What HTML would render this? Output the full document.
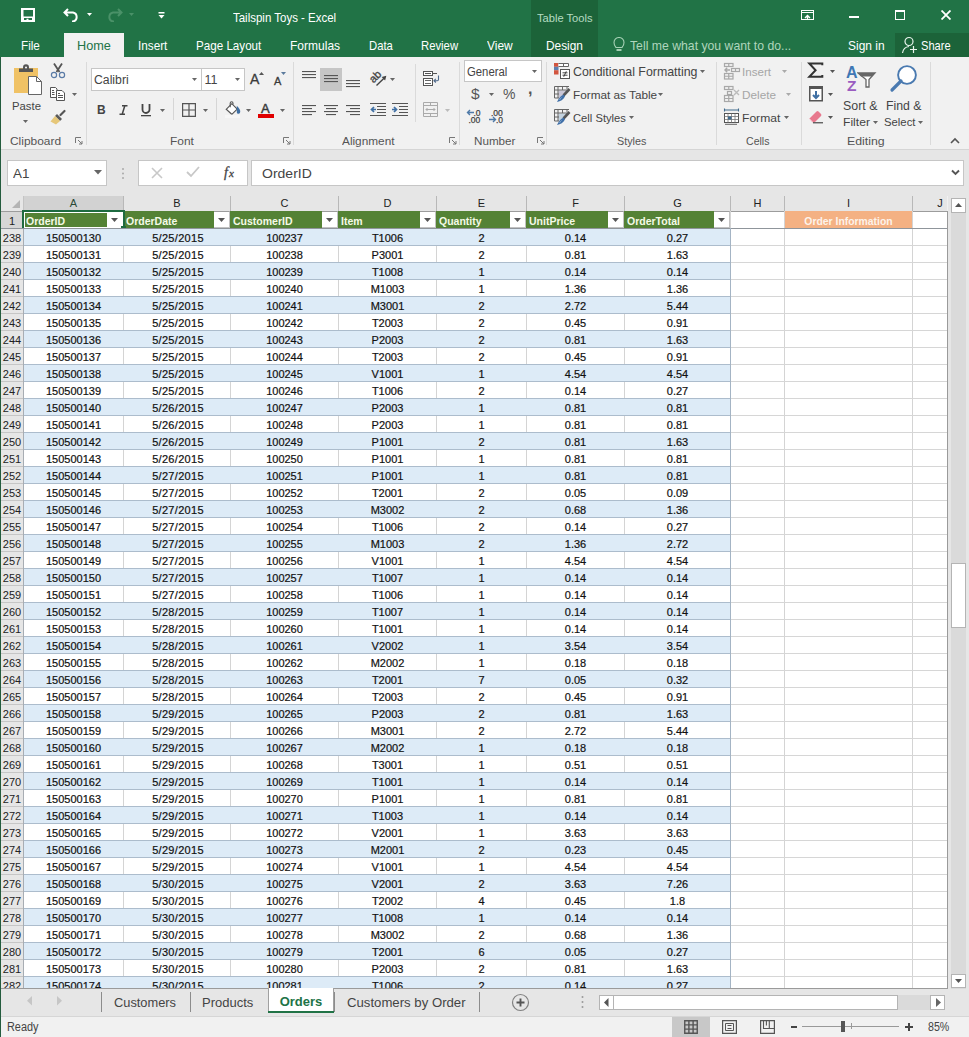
<!DOCTYPE html>
<html><head><meta charset="utf-8"><style>
html,body{margin:0;padding:0;width:969px;height:1037px;overflow:hidden;background:#f1f1f1}
body{position:relative;font-family:"Liberation Sans",sans-serif}
body>div,body>svg{position:absolute}
.t{white-space:nowrap;font-size:12px}
.ch{text-align:center;font-size:11px;line-height:14px}
.rh{left:1px;width:22px;text-align:center;font-size:11px;line-height:18px;color:#222}
.cell{text-align:center;font-size:11px;line-height:18px;color:#111;-webkit-text-stroke:0.2px #111}
.fb{width:16px;height:17px;background:#fff;box-sizing:border-box;border-top:1px solid #9c9c9c;border-right:1px solid #c2c2c2;border-bottom:1px solid #c2c2c2}
.sb{background:#fff;border:1px solid #b4b4b4}
</style></head><body>
<div style="left:1px;top:196px;width:946px;height:15px;background:#e6e6e6"></div>
<svg style="left:12px;top:200px" width="8" height="8"><polygon points="8,0 8,8 0,8" fill="#b4b4b4"/></svg>
<div style="left:24px;top:196px;width:99px;height:14px;background:#d2d2d2"></div>
<div style="left:123px;top:194px;width:1px;height:17px;background:#b8b8b8"></div>
<div style="left:230px;top:194px;width:1px;height:17px;background:#b8b8b8"></div>
<div style="left:338px;top:194px;width:1px;height:17px;background:#b8b8b8"></div>
<div style="left:436px;top:194px;width:1px;height:17px;background:#b8b8b8"></div>
<div style="left:526px;top:194px;width:1px;height:17px;background:#b8b8b8"></div>
<div style="left:624px;top:194px;width:1px;height:17px;background:#b8b8b8"></div>
<div style="left:730px;top:194px;width:1px;height:17px;background:#b8b8b8"></div>
<div style="left:784px;top:194px;width:1px;height:17px;background:#b8b8b8"></div>
<div style="left:912px;top:194px;width:1px;height:17px;background:#b8b8b8"></div>
<div style="left:1px;top:211px;width:946px;height:1px;background:#9c9c9c"></div>
<div class="t ch" style="left:24px;top:196px;width:99px;color:#2a4a36">A</div>
<div class="t ch" style="left:124px;top:196px;width:106px;color:#222">B</div>
<div class="t ch" style="left:231px;top:196px;width:107px;color:#222">C</div>
<div class="t ch" style="left:339px;top:196px;width:97px;color:#222">D</div>
<div class="t ch" style="left:437px;top:196px;width:89px;color:#222">E</div>
<div class="t ch" style="left:527px;top:196px;width:97px;color:#222">F</div>
<div class="t ch" style="left:625px;top:196px;width:105px;color:#222">G</div>
<div class="t ch" style="left:731px;top:196px;width:53px;color:#222">H</div>
<div class="t ch" style="left:785px;top:196px;width:127px;color:#222">I</div>
<div class="t ch" style="left:913px;top:196px;width:54px;color:#222">J</div>
<div style="left:1px;top:212px;width:22px;height:776px;background:#e6e6e6"></div>
<div style="left:1px;top:212px;width:22px;height:16px;background:#d6d6d6"></div>
<div style="left:23px;top:196px;width:1px;height:15px;background:#c4c4c4"></div>
<div style="left:23px;top:211px;width:1px;height:777px;background:#a8adb3"></div>
<div style="left:24px;top:212px;width:923px;height:776px;background:#fff"></div>
<div style="left:23px;top:211px;width:101px;height:17px;background:#548235"></div>
<div class="t" style="left:26px;top:213px;color:#f4fae6;font-weight:bold;font-size:10.5px;line-height:17px">OrderID</div>
<div class="fb" style="left:107px;top:211px"></div>
<svg style="left:111px;top:218px" width="7" height="4"><polygon points="0,0 7,0 3.5,4" fill="#555"/></svg>
<div style="left:123px;top:211px;width:108px;height:17px;background:#548235"></div>
<div class="t" style="left:126px;top:213px;color:#f4fae6;font-weight:bold;font-size:10.5px;line-height:17px">OrderDate</div>
<div class="fb" style="left:214px;top:211px"></div>
<svg style="left:218px;top:218px" width="7" height="4"><polygon points="0,0 7,0 3.5,4" fill="#555"/></svg>
<div style="left:230px;top:211px;width:109px;height:17px;background:#548235"></div>
<div class="t" style="left:233px;top:213px;color:#f4fae6;font-weight:bold;font-size:10.5px;line-height:17px">CustomerID</div>
<div class="fb" style="left:322px;top:211px"></div>
<svg style="left:326px;top:218px" width="7" height="4"><polygon points="0,0 7,0 3.5,4" fill="#555"/></svg>
<div style="left:338px;top:211px;width:99px;height:17px;background:#548235"></div>
<div class="t" style="left:341px;top:213px;color:#f4fae6;font-weight:bold;font-size:10.5px;line-height:17px">Item</div>
<div class="fb" style="left:420px;top:211px"></div>
<svg style="left:424px;top:218px" width="7" height="4"><polygon points="0,0 7,0 3.5,4" fill="#555"/></svg>
<div style="left:436px;top:211px;width:91px;height:17px;background:#548235"></div>
<div class="t" style="left:439px;top:213px;color:#f4fae6;font-weight:bold;font-size:10.5px;line-height:17px">Quantity</div>
<div class="fb" style="left:510px;top:211px"></div>
<svg style="left:514px;top:218px" width="7" height="4"><polygon points="0,0 7,0 3.5,4" fill="#555"/></svg>
<div style="left:526px;top:211px;width:99px;height:17px;background:#548235"></div>
<div class="t" style="left:529px;top:213px;color:#f4fae6;font-weight:bold;font-size:10.5px;line-height:17px">UnitPrice</div>
<div class="fb" style="left:608px;top:211px"></div>
<svg style="left:612px;top:218px" width="7" height="4"><polygon points="0,0 7,0 3.5,4" fill="#555"/></svg>
<div style="left:624px;top:211px;width:107px;height:17px;background:#548235"></div>
<div class="t" style="left:627px;top:213px;color:#f4fae6;font-weight:bold;font-size:10.5px;line-height:17px">OrderTotal</div>
<div class="fb" style="left:714px;top:211px"></div>
<svg style="left:718px;top:218px" width="7" height="4"><polygon points="0,0 7,0 3.5,4" fill="#555"/></svg>
<div style="left:785px;top:211px;width:127px;height:17px;background:#f4b183"></div>
<div class="t" style="left:785px;top:212px;width:127px;text-align:center;color:#fdf3ea;font-weight:bold;font-size:10.4px;line-height:19px">Order Information</div>
<div style="left:123px;top:229px;width:1px;height:759px;background:#d4d4d4"></div>
<div style="left:230px;top:229px;width:1px;height:759px;background:#d4d4d4"></div>
<div style="left:338px;top:229px;width:1px;height:759px;background:#d4d4d4"></div>
<div style="left:436px;top:229px;width:1px;height:759px;background:#d4d4d4"></div>
<div style="left:526px;top:229px;width:1px;height:759px;background:#d4d4d4"></div>
<div style="left:624px;top:229px;width:1px;height:759px;background:#d4d4d4"></div>
<div style="left:784px;top:211px;width:1px;height:777px;background:#d4d4d4"></div>
<div style="left:912px;top:211px;width:1px;height:777px;background:#d4d4d4"></div>
<div style="left:24px;top:229px;width:706px;height:16px;background:#ddebf7"></div>
<div style="left:24px;top:263px;width:706px;height:16px;background:#ddebf7"></div>
<div style="left:24px;top:297px;width:706px;height:16px;background:#ddebf7"></div>
<div style="left:24px;top:331px;width:706px;height:16px;background:#ddebf7"></div>
<div style="left:24px;top:365px;width:706px;height:16px;background:#ddebf7"></div>
<div style="left:24px;top:399px;width:706px;height:16px;background:#ddebf7"></div>
<div style="left:24px;top:433px;width:706px;height:16px;background:#ddebf7"></div>
<div style="left:24px;top:467px;width:706px;height:16px;background:#ddebf7"></div>
<div style="left:24px;top:501px;width:706px;height:16px;background:#ddebf7"></div>
<div style="left:24px;top:535px;width:706px;height:16px;background:#ddebf7"></div>
<div style="left:24px;top:569px;width:706px;height:16px;background:#ddebf7"></div>
<div style="left:24px;top:603px;width:706px;height:16px;background:#ddebf7"></div>
<div style="left:24px;top:637px;width:706px;height:16px;background:#ddebf7"></div>
<div style="left:24px;top:671px;width:706px;height:16px;background:#ddebf7"></div>
<div style="left:24px;top:705px;width:706px;height:16px;background:#ddebf7"></div>
<div style="left:24px;top:739px;width:706px;height:16px;background:#ddebf7"></div>
<div style="left:24px;top:773px;width:706px;height:16px;background:#ddebf7"></div>
<div style="left:24px;top:807px;width:706px;height:16px;background:#ddebf7"></div>
<div style="left:24px;top:841px;width:706px;height:16px;background:#ddebf7"></div>
<div style="left:24px;top:875px;width:706px;height:16px;background:#ddebf7"></div>
<div style="left:24px;top:909px;width:706px;height:16px;background:#ddebf7"></div>
<div style="left:24px;top:943px;width:706px;height:16px;background:#ddebf7"></div>
<div style="left:24px;top:977px;width:706px;height:16px;background:#ddebf7"></div>
<div style="left:1px;top:228px;width:946px;height:1px;background:#8f959b"></div>
<div style="left:1px;top:245px;width:22px;height:1px;background:#c6c6c6"></div>
<div style="left:24px;top:245px;width:706px;height:1px;background:#acbccc"></div>
<div style="left:731px;top:245px;width:216px;height:1px;background:#d6d6d6"></div>
<div style="left:1px;top:262px;width:22px;height:1px;background:#c6c6c6"></div>
<div style="left:24px;top:262px;width:706px;height:1px;background:#acbccc"></div>
<div style="left:731px;top:262px;width:216px;height:1px;background:#d6d6d6"></div>
<div style="left:1px;top:279px;width:22px;height:1px;background:#c6c6c6"></div>
<div style="left:24px;top:279px;width:706px;height:1px;background:#acbccc"></div>
<div style="left:731px;top:279px;width:216px;height:1px;background:#d6d6d6"></div>
<div style="left:1px;top:296px;width:22px;height:1px;background:#c6c6c6"></div>
<div style="left:24px;top:296px;width:706px;height:1px;background:#acbccc"></div>
<div style="left:731px;top:296px;width:216px;height:1px;background:#d6d6d6"></div>
<div style="left:1px;top:313px;width:22px;height:1px;background:#c6c6c6"></div>
<div style="left:24px;top:313px;width:706px;height:1px;background:#acbccc"></div>
<div style="left:731px;top:313px;width:216px;height:1px;background:#d6d6d6"></div>
<div style="left:1px;top:330px;width:22px;height:1px;background:#c6c6c6"></div>
<div style="left:24px;top:330px;width:706px;height:1px;background:#acbccc"></div>
<div style="left:731px;top:330px;width:216px;height:1px;background:#d6d6d6"></div>
<div style="left:1px;top:347px;width:22px;height:1px;background:#c6c6c6"></div>
<div style="left:24px;top:347px;width:706px;height:1px;background:#acbccc"></div>
<div style="left:731px;top:347px;width:216px;height:1px;background:#d6d6d6"></div>
<div style="left:1px;top:364px;width:22px;height:1px;background:#c6c6c6"></div>
<div style="left:24px;top:364px;width:706px;height:1px;background:#acbccc"></div>
<div style="left:731px;top:364px;width:216px;height:1px;background:#d6d6d6"></div>
<div style="left:1px;top:381px;width:22px;height:1px;background:#c6c6c6"></div>
<div style="left:24px;top:381px;width:706px;height:1px;background:#acbccc"></div>
<div style="left:731px;top:381px;width:216px;height:1px;background:#d6d6d6"></div>
<div style="left:1px;top:398px;width:22px;height:1px;background:#c6c6c6"></div>
<div style="left:24px;top:398px;width:706px;height:1px;background:#acbccc"></div>
<div style="left:731px;top:398px;width:216px;height:1px;background:#d6d6d6"></div>
<div style="left:1px;top:415px;width:22px;height:1px;background:#c6c6c6"></div>
<div style="left:24px;top:415px;width:706px;height:1px;background:#acbccc"></div>
<div style="left:731px;top:415px;width:216px;height:1px;background:#d6d6d6"></div>
<div style="left:1px;top:432px;width:22px;height:1px;background:#c6c6c6"></div>
<div style="left:24px;top:432px;width:706px;height:1px;background:#acbccc"></div>
<div style="left:731px;top:432px;width:216px;height:1px;background:#d6d6d6"></div>
<div style="left:1px;top:449px;width:22px;height:1px;background:#c6c6c6"></div>
<div style="left:24px;top:449px;width:706px;height:1px;background:#acbccc"></div>
<div style="left:731px;top:449px;width:216px;height:1px;background:#d6d6d6"></div>
<div style="left:1px;top:466px;width:22px;height:1px;background:#c6c6c6"></div>
<div style="left:24px;top:466px;width:706px;height:1px;background:#acbccc"></div>
<div style="left:731px;top:466px;width:216px;height:1px;background:#d6d6d6"></div>
<div style="left:1px;top:483px;width:22px;height:1px;background:#c6c6c6"></div>
<div style="left:24px;top:483px;width:706px;height:1px;background:#acbccc"></div>
<div style="left:731px;top:483px;width:216px;height:1px;background:#d6d6d6"></div>
<div style="left:1px;top:500px;width:22px;height:1px;background:#c6c6c6"></div>
<div style="left:24px;top:500px;width:706px;height:1px;background:#acbccc"></div>
<div style="left:731px;top:500px;width:216px;height:1px;background:#d6d6d6"></div>
<div style="left:1px;top:517px;width:22px;height:1px;background:#c6c6c6"></div>
<div style="left:24px;top:517px;width:706px;height:1px;background:#acbccc"></div>
<div style="left:731px;top:517px;width:216px;height:1px;background:#d6d6d6"></div>
<div style="left:1px;top:534px;width:22px;height:1px;background:#c6c6c6"></div>
<div style="left:24px;top:534px;width:706px;height:1px;background:#acbccc"></div>
<div style="left:731px;top:534px;width:216px;height:1px;background:#d6d6d6"></div>
<div style="left:1px;top:551px;width:22px;height:1px;background:#c6c6c6"></div>
<div style="left:24px;top:551px;width:706px;height:1px;background:#acbccc"></div>
<div style="left:731px;top:551px;width:216px;height:1px;background:#d6d6d6"></div>
<div style="left:1px;top:568px;width:22px;height:1px;background:#c6c6c6"></div>
<div style="left:24px;top:568px;width:706px;height:1px;background:#acbccc"></div>
<div style="left:731px;top:568px;width:216px;height:1px;background:#d6d6d6"></div>
<div style="left:1px;top:585px;width:22px;height:1px;background:#c6c6c6"></div>
<div style="left:24px;top:585px;width:706px;height:1px;background:#acbccc"></div>
<div style="left:731px;top:585px;width:216px;height:1px;background:#d6d6d6"></div>
<div style="left:1px;top:602px;width:22px;height:1px;background:#c6c6c6"></div>
<div style="left:24px;top:602px;width:706px;height:1px;background:#acbccc"></div>
<div style="left:731px;top:602px;width:216px;height:1px;background:#d6d6d6"></div>
<div style="left:1px;top:619px;width:22px;height:1px;background:#c6c6c6"></div>
<div style="left:24px;top:619px;width:706px;height:1px;background:#acbccc"></div>
<div style="left:731px;top:619px;width:216px;height:1px;background:#d6d6d6"></div>
<div style="left:1px;top:636px;width:22px;height:1px;background:#c6c6c6"></div>
<div style="left:24px;top:636px;width:706px;height:1px;background:#acbccc"></div>
<div style="left:731px;top:636px;width:216px;height:1px;background:#d6d6d6"></div>
<div style="left:1px;top:653px;width:22px;height:1px;background:#c6c6c6"></div>
<div style="left:24px;top:653px;width:706px;height:1px;background:#acbccc"></div>
<div style="left:731px;top:653px;width:216px;height:1px;background:#d6d6d6"></div>
<div style="left:1px;top:670px;width:22px;height:1px;background:#c6c6c6"></div>
<div style="left:24px;top:670px;width:706px;height:1px;background:#acbccc"></div>
<div style="left:731px;top:670px;width:216px;height:1px;background:#d6d6d6"></div>
<div style="left:1px;top:687px;width:22px;height:1px;background:#c6c6c6"></div>
<div style="left:24px;top:687px;width:706px;height:1px;background:#acbccc"></div>
<div style="left:731px;top:687px;width:216px;height:1px;background:#d6d6d6"></div>
<div style="left:1px;top:704px;width:22px;height:1px;background:#c6c6c6"></div>
<div style="left:24px;top:704px;width:706px;height:1px;background:#acbccc"></div>
<div style="left:731px;top:704px;width:216px;height:1px;background:#d6d6d6"></div>
<div style="left:1px;top:721px;width:22px;height:1px;background:#c6c6c6"></div>
<div style="left:24px;top:721px;width:706px;height:1px;background:#acbccc"></div>
<div style="left:731px;top:721px;width:216px;height:1px;background:#d6d6d6"></div>
<div style="left:1px;top:738px;width:22px;height:1px;background:#c6c6c6"></div>
<div style="left:24px;top:738px;width:706px;height:1px;background:#acbccc"></div>
<div style="left:731px;top:738px;width:216px;height:1px;background:#d6d6d6"></div>
<div style="left:1px;top:755px;width:22px;height:1px;background:#c6c6c6"></div>
<div style="left:24px;top:755px;width:706px;height:1px;background:#acbccc"></div>
<div style="left:731px;top:755px;width:216px;height:1px;background:#d6d6d6"></div>
<div style="left:1px;top:772px;width:22px;height:1px;background:#c6c6c6"></div>
<div style="left:24px;top:772px;width:706px;height:1px;background:#acbccc"></div>
<div style="left:731px;top:772px;width:216px;height:1px;background:#d6d6d6"></div>
<div style="left:1px;top:789px;width:22px;height:1px;background:#c6c6c6"></div>
<div style="left:24px;top:789px;width:706px;height:1px;background:#acbccc"></div>
<div style="left:731px;top:789px;width:216px;height:1px;background:#d6d6d6"></div>
<div style="left:1px;top:806px;width:22px;height:1px;background:#c6c6c6"></div>
<div style="left:24px;top:806px;width:706px;height:1px;background:#acbccc"></div>
<div style="left:731px;top:806px;width:216px;height:1px;background:#d6d6d6"></div>
<div style="left:1px;top:823px;width:22px;height:1px;background:#c6c6c6"></div>
<div style="left:24px;top:823px;width:706px;height:1px;background:#acbccc"></div>
<div style="left:731px;top:823px;width:216px;height:1px;background:#d6d6d6"></div>
<div style="left:1px;top:840px;width:22px;height:1px;background:#c6c6c6"></div>
<div style="left:24px;top:840px;width:706px;height:1px;background:#acbccc"></div>
<div style="left:731px;top:840px;width:216px;height:1px;background:#d6d6d6"></div>
<div style="left:1px;top:857px;width:22px;height:1px;background:#c6c6c6"></div>
<div style="left:24px;top:857px;width:706px;height:1px;background:#acbccc"></div>
<div style="left:731px;top:857px;width:216px;height:1px;background:#d6d6d6"></div>
<div style="left:1px;top:874px;width:22px;height:1px;background:#c6c6c6"></div>
<div style="left:24px;top:874px;width:706px;height:1px;background:#acbccc"></div>
<div style="left:731px;top:874px;width:216px;height:1px;background:#d6d6d6"></div>
<div style="left:1px;top:891px;width:22px;height:1px;background:#c6c6c6"></div>
<div style="left:24px;top:891px;width:706px;height:1px;background:#acbccc"></div>
<div style="left:731px;top:891px;width:216px;height:1px;background:#d6d6d6"></div>
<div style="left:1px;top:908px;width:22px;height:1px;background:#c6c6c6"></div>
<div style="left:24px;top:908px;width:706px;height:1px;background:#acbccc"></div>
<div style="left:731px;top:908px;width:216px;height:1px;background:#d6d6d6"></div>
<div style="left:1px;top:925px;width:22px;height:1px;background:#c6c6c6"></div>
<div style="left:24px;top:925px;width:706px;height:1px;background:#acbccc"></div>
<div style="left:731px;top:925px;width:216px;height:1px;background:#d6d6d6"></div>
<div style="left:1px;top:942px;width:22px;height:1px;background:#c6c6c6"></div>
<div style="left:24px;top:942px;width:706px;height:1px;background:#acbccc"></div>
<div style="left:731px;top:942px;width:216px;height:1px;background:#d6d6d6"></div>
<div style="left:1px;top:959px;width:22px;height:1px;background:#c6c6c6"></div>
<div style="left:24px;top:959px;width:706px;height:1px;background:#acbccc"></div>
<div style="left:731px;top:959px;width:216px;height:1px;background:#d6d6d6"></div>
<div style="left:1px;top:976px;width:22px;height:1px;background:#c6c6c6"></div>
<div style="left:24px;top:976px;width:706px;height:1px;background:#acbccc"></div>
<div style="left:731px;top:976px;width:216px;height:1px;background:#d6d6d6"></div>
<div style="left:730px;top:228px;width:1px;height:760px;background:#a4b4c4"></div>
<div style="left:730px;top:211px;width:1px;height:17px;background:#d4d4d4"></div>
<div class="t" style="left:1px;top:213px;width:22px;text-align:center;font-size:11px;line-height:17px;color:#222">1</div>
<div class="t rh" style="top:229px">238</div>
<div class="t cell" style="left:24px;top:229px;width:99px;">150500130</div>
<div class="t cell" style="left:124px;top:229px;width:106px;letter-spacing:0.3px;text-indent:2px;">5/25/2015</div>
<div class="t cell" style="left:231px;top:229px;width:107px;">100237</div>
<div class="t cell" style="left:339px;top:229px;width:97px;">T1006</div>
<div class="t cell" style="left:437px;top:229px;width:89px;">2</div>
<div class="t cell" style="left:527px;top:229px;width:97px;">0.14</div>
<div class="t cell" style="left:625px;top:229px;width:105px;">0.27</div>
<div class="t rh" style="top:246px">239</div>
<div class="t cell" style="left:24px;top:246px;width:99px;">150500131</div>
<div class="t cell" style="left:124px;top:246px;width:106px;letter-spacing:0.3px;text-indent:2px;">5/25/2015</div>
<div class="t cell" style="left:231px;top:246px;width:107px;">100238</div>
<div class="t cell" style="left:339px;top:246px;width:97px;">P3001</div>
<div class="t cell" style="left:437px;top:246px;width:89px;">2</div>
<div class="t cell" style="left:527px;top:246px;width:97px;">0.81</div>
<div class="t cell" style="left:625px;top:246px;width:105px;">1.63</div>
<div class="t rh" style="top:263px">240</div>
<div class="t cell" style="left:24px;top:263px;width:99px;">150500132</div>
<div class="t cell" style="left:124px;top:263px;width:106px;letter-spacing:0.3px;text-indent:2px;">5/25/2015</div>
<div class="t cell" style="left:231px;top:263px;width:107px;">100239</div>
<div class="t cell" style="left:339px;top:263px;width:97px;">T1008</div>
<div class="t cell" style="left:437px;top:263px;width:89px;">1</div>
<div class="t cell" style="left:527px;top:263px;width:97px;">0.14</div>
<div class="t cell" style="left:625px;top:263px;width:105px;">0.14</div>
<div class="t rh" style="top:280px">241</div>
<div class="t cell" style="left:24px;top:280px;width:99px;">150500133</div>
<div class="t cell" style="left:124px;top:280px;width:106px;letter-spacing:0.3px;text-indent:2px;">5/25/2015</div>
<div class="t cell" style="left:231px;top:280px;width:107px;">100240</div>
<div class="t cell" style="left:339px;top:280px;width:97px;">M1003</div>
<div class="t cell" style="left:437px;top:280px;width:89px;">1</div>
<div class="t cell" style="left:527px;top:280px;width:97px;">1.36</div>
<div class="t cell" style="left:625px;top:280px;width:105px;">1.36</div>
<div class="t rh" style="top:297px">242</div>
<div class="t cell" style="left:24px;top:297px;width:99px;">150500134</div>
<div class="t cell" style="left:124px;top:297px;width:106px;letter-spacing:0.3px;text-indent:2px;">5/25/2015</div>
<div class="t cell" style="left:231px;top:297px;width:107px;">100241</div>
<div class="t cell" style="left:339px;top:297px;width:97px;">M3001</div>
<div class="t cell" style="left:437px;top:297px;width:89px;">2</div>
<div class="t cell" style="left:527px;top:297px;width:97px;">2.72</div>
<div class="t cell" style="left:625px;top:297px;width:105px;">5.44</div>
<div class="t rh" style="top:314px">243</div>
<div class="t cell" style="left:24px;top:314px;width:99px;">150500135</div>
<div class="t cell" style="left:124px;top:314px;width:106px;letter-spacing:0.3px;text-indent:2px;">5/25/2015</div>
<div class="t cell" style="left:231px;top:314px;width:107px;">100242</div>
<div class="t cell" style="left:339px;top:314px;width:97px;">T2003</div>
<div class="t cell" style="left:437px;top:314px;width:89px;">2</div>
<div class="t cell" style="left:527px;top:314px;width:97px;">0.45</div>
<div class="t cell" style="left:625px;top:314px;width:105px;">0.91</div>
<div class="t rh" style="top:331px">244</div>
<div class="t cell" style="left:24px;top:331px;width:99px;">150500136</div>
<div class="t cell" style="left:124px;top:331px;width:106px;letter-spacing:0.3px;text-indent:2px;">5/25/2015</div>
<div class="t cell" style="left:231px;top:331px;width:107px;">100243</div>
<div class="t cell" style="left:339px;top:331px;width:97px;">P2003</div>
<div class="t cell" style="left:437px;top:331px;width:89px;">2</div>
<div class="t cell" style="left:527px;top:331px;width:97px;">0.81</div>
<div class="t cell" style="left:625px;top:331px;width:105px;">1.63</div>
<div class="t rh" style="top:348px">245</div>
<div class="t cell" style="left:24px;top:348px;width:99px;">150500137</div>
<div class="t cell" style="left:124px;top:348px;width:106px;letter-spacing:0.3px;text-indent:2px;">5/25/2015</div>
<div class="t cell" style="left:231px;top:348px;width:107px;">100244</div>
<div class="t cell" style="left:339px;top:348px;width:97px;">T2003</div>
<div class="t cell" style="left:437px;top:348px;width:89px;">2</div>
<div class="t cell" style="left:527px;top:348px;width:97px;">0.45</div>
<div class="t cell" style="left:625px;top:348px;width:105px;">0.91</div>
<div class="t rh" style="top:365px">246</div>
<div class="t cell" style="left:24px;top:365px;width:99px;">150500138</div>
<div class="t cell" style="left:124px;top:365px;width:106px;letter-spacing:0.3px;text-indent:2px;">5/25/2015</div>
<div class="t cell" style="left:231px;top:365px;width:107px;">100245</div>
<div class="t cell" style="left:339px;top:365px;width:97px;">V1001</div>
<div class="t cell" style="left:437px;top:365px;width:89px;">1</div>
<div class="t cell" style="left:527px;top:365px;width:97px;">4.54</div>
<div class="t cell" style="left:625px;top:365px;width:105px;">4.54</div>
<div class="t rh" style="top:382px">247</div>
<div class="t cell" style="left:24px;top:382px;width:99px;">150500139</div>
<div class="t cell" style="left:124px;top:382px;width:106px;letter-spacing:0.3px;text-indent:2px;">5/25/2015</div>
<div class="t cell" style="left:231px;top:382px;width:107px;">100246</div>
<div class="t cell" style="left:339px;top:382px;width:97px;">T1006</div>
<div class="t cell" style="left:437px;top:382px;width:89px;">2</div>
<div class="t cell" style="left:527px;top:382px;width:97px;">0.14</div>
<div class="t cell" style="left:625px;top:382px;width:105px;">0.27</div>
<div class="t rh" style="top:399px">248</div>
<div class="t cell" style="left:24px;top:399px;width:99px;">150500140</div>
<div class="t cell" style="left:124px;top:399px;width:106px;letter-spacing:0.3px;text-indent:2px;">5/26/2015</div>
<div class="t cell" style="left:231px;top:399px;width:107px;">100247</div>
<div class="t cell" style="left:339px;top:399px;width:97px;">P2003</div>
<div class="t cell" style="left:437px;top:399px;width:89px;">1</div>
<div class="t cell" style="left:527px;top:399px;width:97px;">0.81</div>
<div class="t cell" style="left:625px;top:399px;width:105px;">0.81</div>
<div class="t rh" style="top:416px">249</div>
<div class="t cell" style="left:24px;top:416px;width:99px;">150500141</div>
<div class="t cell" style="left:124px;top:416px;width:106px;letter-spacing:0.3px;text-indent:2px;">5/26/2015</div>
<div class="t cell" style="left:231px;top:416px;width:107px;">100248</div>
<div class="t cell" style="left:339px;top:416px;width:97px;">P2003</div>
<div class="t cell" style="left:437px;top:416px;width:89px;">1</div>
<div class="t cell" style="left:527px;top:416px;width:97px;">0.81</div>
<div class="t cell" style="left:625px;top:416px;width:105px;">0.81</div>
<div class="t rh" style="top:433px">250</div>
<div class="t cell" style="left:24px;top:433px;width:99px;">150500142</div>
<div class="t cell" style="left:124px;top:433px;width:106px;letter-spacing:0.3px;text-indent:2px;">5/26/2015</div>
<div class="t cell" style="left:231px;top:433px;width:107px;">100249</div>
<div class="t cell" style="left:339px;top:433px;width:97px;">P1001</div>
<div class="t cell" style="left:437px;top:433px;width:89px;">2</div>
<div class="t cell" style="left:527px;top:433px;width:97px;">0.81</div>
<div class="t cell" style="left:625px;top:433px;width:105px;">1.63</div>
<div class="t rh" style="top:450px">251</div>
<div class="t cell" style="left:24px;top:450px;width:99px;">150500143</div>
<div class="t cell" style="left:124px;top:450px;width:106px;letter-spacing:0.3px;text-indent:2px;">5/26/2015</div>
<div class="t cell" style="left:231px;top:450px;width:107px;">100250</div>
<div class="t cell" style="left:339px;top:450px;width:97px;">P1001</div>
<div class="t cell" style="left:437px;top:450px;width:89px;">1</div>
<div class="t cell" style="left:527px;top:450px;width:97px;">0.81</div>
<div class="t cell" style="left:625px;top:450px;width:105px;">0.81</div>
<div class="t rh" style="top:467px">252</div>
<div class="t cell" style="left:24px;top:467px;width:99px;">150500144</div>
<div class="t cell" style="left:124px;top:467px;width:106px;letter-spacing:0.3px;text-indent:2px;">5/27/2015</div>
<div class="t cell" style="left:231px;top:467px;width:107px;">100251</div>
<div class="t cell" style="left:339px;top:467px;width:97px;">P1001</div>
<div class="t cell" style="left:437px;top:467px;width:89px;">1</div>
<div class="t cell" style="left:527px;top:467px;width:97px;">0.81</div>
<div class="t cell" style="left:625px;top:467px;width:105px;">0.81</div>
<div class="t rh" style="top:484px">253</div>
<div class="t cell" style="left:24px;top:484px;width:99px;">150500145</div>
<div class="t cell" style="left:124px;top:484px;width:106px;letter-spacing:0.3px;text-indent:2px;">5/27/2015</div>
<div class="t cell" style="left:231px;top:484px;width:107px;">100252</div>
<div class="t cell" style="left:339px;top:484px;width:97px;">T2001</div>
<div class="t cell" style="left:437px;top:484px;width:89px;">2</div>
<div class="t cell" style="left:527px;top:484px;width:97px;">0.05</div>
<div class="t cell" style="left:625px;top:484px;width:105px;">0.09</div>
<div class="t rh" style="top:501px">254</div>
<div class="t cell" style="left:24px;top:501px;width:99px;">150500146</div>
<div class="t cell" style="left:124px;top:501px;width:106px;letter-spacing:0.3px;text-indent:2px;">5/27/2015</div>
<div class="t cell" style="left:231px;top:501px;width:107px;">100253</div>
<div class="t cell" style="left:339px;top:501px;width:97px;">M3002</div>
<div class="t cell" style="left:437px;top:501px;width:89px;">2</div>
<div class="t cell" style="left:527px;top:501px;width:97px;">0.68</div>
<div class="t cell" style="left:625px;top:501px;width:105px;">1.36</div>
<div class="t rh" style="top:518px">255</div>
<div class="t cell" style="left:24px;top:518px;width:99px;">150500147</div>
<div class="t cell" style="left:124px;top:518px;width:106px;letter-spacing:0.3px;text-indent:2px;">5/27/2015</div>
<div class="t cell" style="left:231px;top:518px;width:107px;">100254</div>
<div class="t cell" style="left:339px;top:518px;width:97px;">T1006</div>
<div class="t cell" style="left:437px;top:518px;width:89px;">2</div>
<div class="t cell" style="left:527px;top:518px;width:97px;">0.14</div>
<div class="t cell" style="left:625px;top:518px;width:105px;">0.27</div>
<div class="t rh" style="top:535px">256</div>
<div class="t cell" style="left:24px;top:535px;width:99px;">150500148</div>
<div class="t cell" style="left:124px;top:535px;width:106px;letter-spacing:0.3px;text-indent:2px;">5/27/2015</div>
<div class="t cell" style="left:231px;top:535px;width:107px;">100255</div>
<div class="t cell" style="left:339px;top:535px;width:97px;">M1003</div>
<div class="t cell" style="left:437px;top:535px;width:89px;">2</div>
<div class="t cell" style="left:527px;top:535px;width:97px;">1.36</div>
<div class="t cell" style="left:625px;top:535px;width:105px;">2.72</div>
<div class="t rh" style="top:552px">257</div>
<div class="t cell" style="left:24px;top:552px;width:99px;">150500149</div>
<div class="t cell" style="left:124px;top:552px;width:106px;letter-spacing:0.3px;text-indent:2px;">5/27/2015</div>
<div class="t cell" style="left:231px;top:552px;width:107px;">100256</div>
<div class="t cell" style="left:339px;top:552px;width:97px;">V1001</div>
<div class="t cell" style="left:437px;top:552px;width:89px;">1</div>
<div class="t cell" style="left:527px;top:552px;width:97px;">4.54</div>
<div class="t cell" style="left:625px;top:552px;width:105px;">4.54</div>
<div class="t rh" style="top:569px">258</div>
<div class="t cell" style="left:24px;top:569px;width:99px;">150500150</div>
<div class="t cell" style="left:124px;top:569px;width:106px;letter-spacing:0.3px;text-indent:2px;">5/27/2015</div>
<div class="t cell" style="left:231px;top:569px;width:107px;">100257</div>
<div class="t cell" style="left:339px;top:569px;width:97px;">T1007</div>
<div class="t cell" style="left:437px;top:569px;width:89px;">1</div>
<div class="t cell" style="left:527px;top:569px;width:97px;">0.14</div>
<div class="t cell" style="left:625px;top:569px;width:105px;">0.14</div>
<div class="t rh" style="top:586px">259</div>
<div class="t cell" style="left:24px;top:586px;width:99px;">150500151</div>
<div class="t cell" style="left:124px;top:586px;width:106px;letter-spacing:0.3px;text-indent:2px;">5/27/2015</div>
<div class="t cell" style="left:231px;top:586px;width:107px;">100258</div>
<div class="t cell" style="left:339px;top:586px;width:97px;">T1006</div>
<div class="t cell" style="left:437px;top:586px;width:89px;">1</div>
<div class="t cell" style="left:527px;top:586px;width:97px;">0.14</div>
<div class="t cell" style="left:625px;top:586px;width:105px;">0.14</div>
<div class="t rh" style="top:603px">260</div>
<div class="t cell" style="left:24px;top:603px;width:99px;">150500152</div>
<div class="t cell" style="left:124px;top:603px;width:106px;letter-spacing:0.3px;text-indent:2px;">5/28/2015</div>
<div class="t cell" style="left:231px;top:603px;width:107px;">100259</div>
<div class="t cell" style="left:339px;top:603px;width:97px;">T1007</div>
<div class="t cell" style="left:437px;top:603px;width:89px;">1</div>
<div class="t cell" style="left:527px;top:603px;width:97px;">0.14</div>
<div class="t cell" style="left:625px;top:603px;width:105px;">0.14</div>
<div class="t rh" style="top:620px">261</div>
<div class="t cell" style="left:24px;top:620px;width:99px;">150500153</div>
<div class="t cell" style="left:124px;top:620px;width:106px;letter-spacing:0.3px;text-indent:2px;">5/28/2015</div>
<div class="t cell" style="left:231px;top:620px;width:107px;">100260</div>
<div class="t cell" style="left:339px;top:620px;width:97px;">T1001</div>
<div class="t cell" style="left:437px;top:620px;width:89px;">1</div>
<div class="t cell" style="left:527px;top:620px;width:97px;">0.14</div>
<div class="t cell" style="left:625px;top:620px;width:105px;">0.14</div>
<div class="t rh" style="top:637px">262</div>
<div class="t cell" style="left:24px;top:637px;width:99px;">150500154</div>
<div class="t cell" style="left:124px;top:637px;width:106px;letter-spacing:0.3px;text-indent:2px;">5/28/2015</div>
<div class="t cell" style="left:231px;top:637px;width:107px;">100261</div>
<div class="t cell" style="left:339px;top:637px;width:97px;">V2002</div>
<div class="t cell" style="left:437px;top:637px;width:89px;">1</div>
<div class="t cell" style="left:527px;top:637px;width:97px;">3.54</div>
<div class="t cell" style="left:625px;top:637px;width:105px;">3.54</div>
<div class="t rh" style="top:654px">263</div>
<div class="t cell" style="left:24px;top:654px;width:99px;">150500155</div>
<div class="t cell" style="left:124px;top:654px;width:106px;letter-spacing:0.3px;text-indent:2px;">5/28/2015</div>
<div class="t cell" style="left:231px;top:654px;width:107px;">100262</div>
<div class="t cell" style="left:339px;top:654px;width:97px;">M2002</div>
<div class="t cell" style="left:437px;top:654px;width:89px;">1</div>
<div class="t cell" style="left:527px;top:654px;width:97px;">0.18</div>
<div class="t cell" style="left:625px;top:654px;width:105px;">0.18</div>
<div class="t rh" style="top:671px">264</div>
<div class="t cell" style="left:24px;top:671px;width:99px;">150500156</div>
<div class="t cell" style="left:124px;top:671px;width:106px;letter-spacing:0.3px;text-indent:2px;">5/28/2015</div>
<div class="t cell" style="left:231px;top:671px;width:107px;">100263</div>
<div class="t cell" style="left:339px;top:671px;width:97px;">T2001</div>
<div class="t cell" style="left:437px;top:671px;width:89px;">7</div>
<div class="t cell" style="left:527px;top:671px;width:97px;">0.05</div>
<div class="t cell" style="left:625px;top:671px;width:105px;">0.32</div>
<div class="t rh" style="top:688px">265</div>
<div class="t cell" style="left:24px;top:688px;width:99px;">150500157</div>
<div class="t cell" style="left:124px;top:688px;width:106px;letter-spacing:0.3px;text-indent:2px;">5/28/2015</div>
<div class="t cell" style="left:231px;top:688px;width:107px;">100264</div>
<div class="t cell" style="left:339px;top:688px;width:97px;">T2003</div>
<div class="t cell" style="left:437px;top:688px;width:89px;">2</div>
<div class="t cell" style="left:527px;top:688px;width:97px;">0.45</div>
<div class="t cell" style="left:625px;top:688px;width:105px;">0.91</div>
<div class="t rh" style="top:705px">266</div>
<div class="t cell" style="left:24px;top:705px;width:99px;">150500158</div>
<div class="t cell" style="left:124px;top:705px;width:106px;letter-spacing:0.3px;text-indent:2px;">5/29/2015</div>
<div class="t cell" style="left:231px;top:705px;width:107px;">100265</div>
<div class="t cell" style="left:339px;top:705px;width:97px;">P2003</div>
<div class="t cell" style="left:437px;top:705px;width:89px;">2</div>
<div class="t cell" style="left:527px;top:705px;width:97px;">0.81</div>
<div class="t cell" style="left:625px;top:705px;width:105px;">1.63</div>
<div class="t rh" style="top:722px">267</div>
<div class="t cell" style="left:24px;top:722px;width:99px;">150500159</div>
<div class="t cell" style="left:124px;top:722px;width:106px;letter-spacing:0.3px;text-indent:2px;">5/29/2015</div>
<div class="t cell" style="left:231px;top:722px;width:107px;">100266</div>
<div class="t cell" style="left:339px;top:722px;width:97px;">M3001</div>
<div class="t cell" style="left:437px;top:722px;width:89px;">2</div>
<div class="t cell" style="left:527px;top:722px;width:97px;">2.72</div>
<div class="t cell" style="left:625px;top:722px;width:105px;">5.44</div>
<div class="t rh" style="top:739px">268</div>
<div class="t cell" style="left:24px;top:739px;width:99px;">150500160</div>
<div class="t cell" style="left:124px;top:739px;width:106px;letter-spacing:0.3px;text-indent:2px;">5/29/2015</div>
<div class="t cell" style="left:231px;top:739px;width:107px;">100267</div>
<div class="t cell" style="left:339px;top:739px;width:97px;">M2002</div>
<div class="t cell" style="left:437px;top:739px;width:89px;">1</div>
<div class="t cell" style="left:527px;top:739px;width:97px;">0.18</div>
<div class="t cell" style="left:625px;top:739px;width:105px;">0.18</div>
<div class="t rh" style="top:756px">269</div>
<div class="t cell" style="left:24px;top:756px;width:99px;">150500161</div>
<div class="t cell" style="left:124px;top:756px;width:106px;letter-spacing:0.3px;text-indent:2px;">5/29/2015</div>
<div class="t cell" style="left:231px;top:756px;width:107px;">100268</div>
<div class="t cell" style="left:339px;top:756px;width:97px;">T3001</div>
<div class="t cell" style="left:437px;top:756px;width:89px;">1</div>
<div class="t cell" style="left:527px;top:756px;width:97px;">0.51</div>
<div class="t cell" style="left:625px;top:756px;width:105px;">0.51</div>
<div class="t rh" style="top:773px">270</div>
<div class="t cell" style="left:24px;top:773px;width:99px;">150500162</div>
<div class="t cell" style="left:124px;top:773px;width:106px;letter-spacing:0.3px;text-indent:2px;">5/29/2015</div>
<div class="t cell" style="left:231px;top:773px;width:107px;">100269</div>
<div class="t cell" style="left:339px;top:773px;width:97px;">T1001</div>
<div class="t cell" style="left:437px;top:773px;width:89px;">1</div>
<div class="t cell" style="left:527px;top:773px;width:97px;">0.14</div>
<div class="t cell" style="left:625px;top:773px;width:105px;">0.14</div>
<div class="t rh" style="top:790px">271</div>
<div class="t cell" style="left:24px;top:790px;width:99px;">150500163</div>
<div class="t cell" style="left:124px;top:790px;width:106px;letter-spacing:0.3px;text-indent:2px;">5/29/2015</div>
<div class="t cell" style="left:231px;top:790px;width:107px;">100270</div>
<div class="t cell" style="left:339px;top:790px;width:97px;">P1001</div>
<div class="t cell" style="left:437px;top:790px;width:89px;">1</div>
<div class="t cell" style="left:527px;top:790px;width:97px;">0.81</div>
<div class="t cell" style="left:625px;top:790px;width:105px;">0.81</div>
<div class="t rh" style="top:807px">272</div>
<div class="t cell" style="left:24px;top:807px;width:99px;">150500164</div>
<div class="t cell" style="left:124px;top:807px;width:106px;letter-spacing:0.3px;text-indent:2px;">5/29/2015</div>
<div class="t cell" style="left:231px;top:807px;width:107px;">100271</div>
<div class="t cell" style="left:339px;top:807px;width:97px;">T1003</div>
<div class="t cell" style="left:437px;top:807px;width:89px;">1</div>
<div class="t cell" style="left:527px;top:807px;width:97px;">0.14</div>
<div class="t cell" style="left:625px;top:807px;width:105px;">0.14</div>
<div class="t rh" style="top:824px">273</div>
<div class="t cell" style="left:24px;top:824px;width:99px;">150500165</div>
<div class="t cell" style="left:124px;top:824px;width:106px;letter-spacing:0.3px;text-indent:2px;">5/29/2015</div>
<div class="t cell" style="left:231px;top:824px;width:107px;">100272</div>
<div class="t cell" style="left:339px;top:824px;width:97px;">V2001</div>
<div class="t cell" style="left:437px;top:824px;width:89px;">1</div>
<div class="t cell" style="left:527px;top:824px;width:97px;">3.63</div>
<div class="t cell" style="left:625px;top:824px;width:105px;">3.63</div>
<div class="t rh" style="top:841px">274</div>
<div class="t cell" style="left:24px;top:841px;width:99px;">150500166</div>
<div class="t cell" style="left:124px;top:841px;width:106px;letter-spacing:0.3px;text-indent:2px;">5/29/2015</div>
<div class="t cell" style="left:231px;top:841px;width:107px;">100273</div>
<div class="t cell" style="left:339px;top:841px;width:97px;">M2001</div>
<div class="t cell" style="left:437px;top:841px;width:89px;">2</div>
<div class="t cell" style="left:527px;top:841px;width:97px;">0.23</div>
<div class="t cell" style="left:625px;top:841px;width:105px;">0.45</div>
<div class="t rh" style="top:858px">275</div>
<div class="t cell" style="left:24px;top:858px;width:99px;">150500167</div>
<div class="t cell" style="left:124px;top:858px;width:106px;letter-spacing:0.3px;text-indent:2px;">5/29/2015</div>
<div class="t cell" style="left:231px;top:858px;width:107px;">100274</div>
<div class="t cell" style="left:339px;top:858px;width:97px;">V1001</div>
<div class="t cell" style="left:437px;top:858px;width:89px;">1</div>
<div class="t cell" style="left:527px;top:858px;width:97px;">4.54</div>
<div class="t cell" style="left:625px;top:858px;width:105px;">4.54</div>
<div class="t rh" style="top:875px">276</div>
<div class="t cell" style="left:24px;top:875px;width:99px;">150500168</div>
<div class="t cell" style="left:124px;top:875px;width:106px;letter-spacing:0.3px;text-indent:2px;">5/30/2015</div>
<div class="t cell" style="left:231px;top:875px;width:107px;">100275</div>
<div class="t cell" style="left:339px;top:875px;width:97px;">V2001</div>
<div class="t cell" style="left:437px;top:875px;width:89px;">2</div>
<div class="t cell" style="left:527px;top:875px;width:97px;">3.63</div>
<div class="t cell" style="left:625px;top:875px;width:105px;">7.26</div>
<div class="t rh" style="top:892px">277</div>
<div class="t cell" style="left:24px;top:892px;width:99px;">150500169</div>
<div class="t cell" style="left:124px;top:892px;width:106px;letter-spacing:0.3px;text-indent:2px;">5/30/2015</div>
<div class="t cell" style="left:231px;top:892px;width:107px;">100276</div>
<div class="t cell" style="left:339px;top:892px;width:97px;">T2002</div>
<div class="t cell" style="left:437px;top:892px;width:89px;">4</div>
<div class="t cell" style="left:527px;top:892px;width:97px;">0.45</div>
<div class="t cell" style="left:625px;top:892px;width:105px;">1.8</div>
<div class="t rh" style="top:909px">278</div>
<div class="t cell" style="left:24px;top:909px;width:99px;">150500170</div>
<div class="t cell" style="left:124px;top:909px;width:106px;letter-spacing:0.3px;text-indent:2px;">5/30/2015</div>
<div class="t cell" style="left:231px;top:909px;width:107px;">100277</div>
<div class="t cell" style="left:339px;top:909px;width:97px;">T1008</div>
<div class="t cell" style="left:437px;top:909px;width:89px;">1</div>
<div class="t cell" style="left:527px;top:909px;width:97px;">0.14</div>
<div class="t cell" style="left:625px;top:909px;width:105px;">0.14</div>
<div class="t rh" style="top:926px">279</div>
<div class="t cell" style="left:24px;top:926px;width:99px;">150500171</div>
<div class="t cell" style="left:124px;top:926px;width:106px;letter-spacing:0.3px;text-indent:2px;">5/30/2015</div>
<div class="t cell" style="left:231px;top:926px;width:107px;">100278</div>
<div class="t cell" style="left:339px;top:926px;width:97px;">M3002</div>
<div class="t cell" style="left:437px;top:926px;width:89px;">2</div>
<div class="t cell" style="left:527px;top:926px;width:97px;">0.68</div>
<div class="t cell" style="left:625px;top:926px;width:105px;">1.36</div>
<div class="t rh" style="top:943px">280</div>
<div class="t cell" style="left:24px;top:943px;width:99px;">150500172</div>
<div class="t cell" style="left:124px;top:943px;width:106px;letter-spacing:0.3px;text-indent:2px;">5/30/2015</div>
<div class="t cell" style="left:231px;top:943px;width:107px;">100279</div>
<div class="t cell" style="left:339px;top:943px;width:97px;">T2001</div>
<div class="t cell" style="left:437px;top:943px;width:89px;">6</div>
<div class="t cell" style="left:527px;top:943px;width:97px;">0.05</div>
<div class="t cell" style="left:625px;top:943px;width:105px;">0.27</div>
<div class="t rh" style="top:960px">281</div>
<div class="t cell" style="left:24px;top:960px;width:99px;">150500173</div>
<div class="t cell" style="left:124px;top:960px;width:106px;letter-spacing:0.3px;text-indent:2px;">5/30/2015</div>
<div class="t cell" style="left:231px;top:960px;width:107px;">100280</div>
<div class="t cell" style="left:339px;top:960px;width:97px;">P2003</div>
<div class="t cell" style="left:437px;top:960px;width:89px;">2</div>
<div class="t cell" style="left:527px;top:960px;width:97px;">0.81</div>
<div class="t cell" style="left:625px;top:960px;width:105px;">1.63</div>
<div class="t rh" style="top:977px">282</div>
<div class="t cell" style="left:24px;top:977px;width:99px;">150500174</div>
<div class="t cell" style="left:124px;top:977px;width:106px;letter-spacing:0.3px;text-indent:2px;">5/30/2015</div>
<div class="t cell" style="left:231px;top:977px;width:107px;">100281</div>
<div class="t cell" style="left:339px;top:977px;width:97px;">T1006</div>
<div class="t cell" style="left:437px;top:977px;width:89px;">2</div>
<div class="t cell" style="left:527px;top:977px;width:97px;">0.14</div>
<div class="t cell" style="left:625px;top:977px;width:105px;">0.27</div>
<div style="left:22px;top:210px;width:103px;height:18px;border:2px solid #1e6b40;border-bottom:0;box-sizing:border-box"></div>
<div style="left:24px;top:212px;width:99px;height:16px;border:1px solid #fff;box-sizing:border-box"></div>
<div style="left:121px;top:226px;width:5px;height:2px;background:#1e6b40"></div>
<div style="left:947px;top:211px;width:1px;height:778px;background:#9a9a9a"></div>
<div style="left:1px;top:988px;width:947px;height:1px;background:#9a9a9a"></div>
<div style="left:948px;top:196px;width:21px;height:793px;background:#e6e6e6"></div>
<div style="left:951px;top:199px;width:15px;height:790px;background:#dadada"></div>
<div class="sb" style="left:951px;top:198px;width:13px;height:13px"></div>
<svg style="left:955px;top:203px" width="7" height="4"><polygon points="0,4 7,4 3.5,0" fill="#555"/></svg>
<div class="sb" style="left:951px;top:563px;width:13px;height:63px"></div>
<div class="sb" style="left:951px;top:974px;width:13px;height:12px"></div>
<svg style="left:955px;top:979px" width="7" height="4"><polygon points="0,0 7,0 3.5,4" fill="#555"/></svg>
<div style="left:1px;top:989px;width:968px;height:27px;background:#e6e6e6"></div>
<svg style="left:27px;top:996px" width="5" height="10"><polygon points="5,0 5,9.5 0,4.75" fill="#c6c6c6"/></svg>
<svg style="left:57px;top:996px" width="5" height="10"><polygon points="0,0 0,9.5 5,4.75" fill="#c6c6c6"/></svg>
<div style="left:101px;top:992px;width:1px;height:20px;background:#8c8c8c"></div>
<div style="left:190px;top:992px;width:1px;height:20px;background:#8c8c8c"></div>
<div style="left:268px;top:992px;width:1px;height:20px;background:#8c8c8c"></div>
<div style="left:334px;top:992px;width:1px;height:20px;background:#8c8c8c"></div>
<div style="left:479px;top:992px;width:1px;height:20px;background:#8c8c8c"></div>
<div class="t" style="left:113.86px;top:990px;font-size:13px;line-height:26px;transform:scaleX(0.9862);transform-origin:0 0;color:#444">Customers</div>
<div class="t" style="left:202.43px;top:990px;font-size:13px;line-height:26px;transform:scaleX(1.0002);transform-origin:0 0;color:#444">Products</div>
<div style="left:268px;top:988px;width:66px;height:24px;background:#fff;border-left:1px solid #a0a0a0;border-right:1px solid #a0a0a0;box-sizing:border-box"></div>
<div style="left:268px;top:1011px;width:66px;height:2px;background:#217346"></div>
<div class="t" style="left:268px;top:990px;width:66px;text-align:center;font-size:13px;font-weight:bold;line-height:24px;color:#217346">Orders</div>
<div class="t" style="left:347.14px;top:990px;font-size:13px;line-height:26px;transform:scaleX(1.0130);transform-origin:0 0;color:#444">Customers by Order</div>
<svg style="left:511px;top:993px" width="19" height="19"><circle cx="9.5" cy="9.5" r="8" fill="none" stroke="#808080" stroke-width="1.2"/><path d="M5.5 9.5h8M9.5 5.5v8" stroke="#555" stroke-width="1.9"/></svg>
<svg style="left:581px;top:995px" width="3" height="16"><circle cx="1.5" cy="2" r="1" fill="#999"/><circle cx="1.5" cy="7" r="1" fill="#999"/><circle cx="1.5" cy="12" r="1" fill="#999"/></svg>
<div style="left:599px;top:995px;width:346px;height:15px;background:#dadada"></div>
<div class="sb" style="left:599px;top:995px;width:14px;height:13px"></div>
<svg style="left:604px;top:998px" width="5" height="9"><polygon points="4.5,0 4.5,9 0,4.5" fill="#555"/></svg>
<div class="sb" style="left:613px;top:995px;width:283px;height:13px"></div>
<div class="sb" style="left:930px;top:995px;width:13px;height:13px"></div>
<svg style="left:936px;top:998px" width="5" height="9"><polygon points="0,0 0,9 5,4.5" fill="#666"/></svg>
<div style="left:1px;top:1016px;width:968px;height:21px;background:#f1f1f1"></div>
<div style="left:1px;top:1016px;width:968px;height:1px;background:#d6d6d6"></div>
<div class="t" style="left:7.40px;top:1016px;font-size:12px;line-height:22px;transform:scaleX(0.9061);transform-origin:0 0;color:#444">Ready</div>
<div style="left:672px;top:1017px;width:38px;height:20px;background:#c8c8c8"></div>
<svg style="left:684px;top:1020px" width="14" height="14"><path d="M0.75 0.75h12.5v12.5h-12.5zM0.75 4.9h12.5M0.75 9.1h12.5M4.9 0.75v12.5M9.1 0.75v12.5" fill="none" stroke="#555" stroke-width="1.4"/></svg>
<svg style="left:722px;top:1020px" width="15" height="14"><path d="M0.6 0.6h13.8v12.8h-13.8z" fill="none" stroke="#555" stroke-width="1.2"/><path d="M3.5 3.5h8v7h-8z" fill="none" stroke="#555" stroke-width="1"/><path d="M5.5 5.5h4M5.5 8.5h4" stroke="#555" stroke-width="1"/></svg>
<svg style="left:760px;top:1020px" width="15" height="14"><path d="M0.6 0.6h13.8v12.8h-13.8z" fill="none" stroke="#555" stroke-width="1.2"/><path d="M3.5 0.6V8.5H14M9.3 0.6V8.5M6.4 0.6V5.5" fill="none" stroke="#555" stroke-width="1.1"/></svg>
<div style="left:791px;top:1026px;width:6px;height:2px;background:#444"></div>
<div style="left:802px;top:1026px;width:97px;height:1px;background:#999"></div>
<div style="left:841px;top:1021px;width:4px;height:11px;background:#555"></div>
<div style="left:851px;top:1023px;width:1px;height:6px;background:#999"></div>
<div style="left:905px;top:1026px;width:8px;height:2px;background:#444"></div>
<div style="left:908px;top:1023px;width:2px;height:8px;background:#444"></div>
<div class="t" style="left:927.75px;top:1016px;font-size:12px;line-height:22px;transform:scaleX(0.8874);transform-origin:0 0;color:#444">85%</div>
<div style="left:1px;top:150px;width:968px;height:46px;background:#e6e6e6"></div>
<div style="left:7px;top:160px;width:100px;height:26px;background:#fff;border:1px solid #c6c6c6;box-sizing:border-box"></div>
<div class="t" style="left:13.17px;top:161px;font-size:13px;line-height:25px;transform:scaleX(1.0300);transform-origin:0 0;color:#444">A1</div>
<svg style="left:94px;top:170px" width="8" height="5"><polygon points="0,0 8,0 4,4.5" fill="#666"/></svg>
<svg style="left:121px;top:167px" width="4" height="14"><circle cx="2" cy="2" r="1" fill="#aaa"/><circle cx="2" cy="6.5" r="1" fill="#aaa"/><circle cx="2" cy="11" r="1" fill="#aaa"/></svg>
<div style="left:138px;top:160px;width:110px;height:26px;background:#fff;border:1px solid #c6c6c6;box-sizing:border-box"></div>
<svg style="left:151px;top:167px" width="12" height="12"><path d="M1 1L11 11M11 1L1 11" stroke="#c8c8c8" stroke-width="1.6"/></svg>
<svg style="left:186px;top:166px" width="14" height="12"><path d="M1 6L5 10L13 1" fill="none" stroke="#c8c8c8" stroke-width="1.8"/></svg>
<div class="t" style="left:224px;top:160px;font-family:'Liberation Serif',serif;font-size:14px;line-height:25px;color:#444;-webkit-text-stroke:0.3px #444"><i>f</i><span style="font-size:11px;margin-left:1px"><i>x</i></span></div>
<div style="left:251px;top:160px;width:713px;height:26px;background:#fff;border:1px solid #c6c6c6;box-sizing:border-box"></div>
<div class="t" style="left:262.43px;top:161px;font-size:13px;line-height:25px;transform:scaleX(1.0775);transform-origin:0 0;color:#444">OrderID</div>
<svg style="left:951px;top:169px" width="10" height="7"><path d="M1 1.5L4.5 5L8 1.5" fill="none" stroke="#555" stroke-width="1.9"/></svg>
<div style="left:0px;top:0px;width:969px;height:57px;background:#217346"></div>
<div style="left:531px;top:0px;width:67px;height:57px;background:#1c6339"></div>
<div style="left:895px;top:33px;width:74px;height:24px;background:#1c6339"></div>
<div style="left:64px;top:33px;width:60px;height:24px;background:#f1f1f1"></div>
<div class="t" style="left:232.74px;top:1px;font-size:12.4px;line-height:35px;transform:scaleX(0.9266);transform-origin:0 0;color:#fff">Tailspin Toys - Excel</div>
<div class="t" style="left:536.55px;top:1px;font-size:11px;line-height:35px;transform:scaleX(1.0110);transform-origin:0 0;color:#b5dcc2">Table Tools</div>
<div class="t" style="left:20.63px;top:33px;font-size:12.4px;line-height:26px;transform:scaleX(0.9449);transform-origin:0 0;color:#fff">File</div>
<div class="t" style="left:76.65px;top:33px;font-size:12.4px;line-height:26px;transform:scaleX(1.0245);transform-origin:0 0;color:#217346">Home</div>
<div class="t" style="left:138.41px;top:33px;font-size:12.4px;line-height:26px;transform:scaleX(0.9476);transform-origin:0 0;color:#fff">Insert</div>
<div class="t" style="left:196.04px;top:33px;font-size:12.4px;line-height:26px;transform:scaleX(0.9385);transform-origin:0 0;color:#fff">Page Layout</div>
<div class="t" style="left:290.31px;top:33px;font-size:12.4px;line-height:26px;transform:scaleX(0.9697);transform-origin:0 0;color:#fff">Formulas</div>
<div class="t" style="left:368.77px;top:33px;font-size:12.4px;line-height:26px;transform:scaleX(0.9097);transform-origin:0 0;color:#fff">Data</div>
<div class="t" style="left:421.37px;top:33px;font-size:12.4px;line-height:26px;transform:scaleX(0.9123);transform-origin:0 0;color:#fff">Review</div>
<div class="t" style="left:487.24px;top:33px;font-size:12.4px;line-height:26px;transform:scaleX(0.9651);transform-origin:0 0;color:#fff">View</div>
<div class="t" style="left:545.52px;top:33px;font-size:12.4px;line-height:26px;transform:scaleX(0.9566);transform-origin:0 0;color:#fff">Design</div>
<div class="t" style="left:848.46px;top:33px;font-size:12.4px;line-height:26px;transform:scaleX(0.9650);transform-origin:0 0;color:#fff">Sign in</div>
<div class="t" style="left:920.90px;top:33px;font-size:12.4px;line-height:26px;transform:scaleX(0.8940);transform-origin:0 0;color:#fff">Share</div>
<div class="t" style="left:630.12px;top:33px;font-size:12.4px;line-height:26px;transform:scaleX(0.9880);transform-origin:0 0;color:#b0d6bd">Tell me what you want to do...</div>
<div style="left:1px;top:57px;width:968px;height:93px;background:#f1f1f1"></div>
<div style="left:1px;top:149px;width:968px;height:1px;background:#d5d5d5"></div>
<div style="left:86px;top:62px;width:1px;height:83px;background:#dadada"></div>
<div style="left:293px;top:62px;width:1px;height:83px;background:#dadada"></div>
<div style="left:459px;top:62px;width:1px;height:83px;background:#dadada"></div>
<div style="left:546px;top:62px;width:1px;height:83px;background:#dadada"></div>
<div style="left:716px;top:62px;width:1px;height:83px;background:#dadada"></div>
<div style="left:801px;top:62px;width:1px;height:83px;background:#dadada"></div>
<div style="left:930px;top:62px;width:1px;height:83px;background:#dadada"></div>
<div class="t" style="left:10.10px;top:133px;font-size:11.5px;line-height:16px;transform:scaleX(1.0370);transform-origin:0 0;color:#555">Clipboard</div>
<div class="t" style="left:169.62px;top:133px;font-size:11.5px;line-height:16px;transform:scaleX(1.0380);transform-origin:0 0;color:#555">Font</div>
<div class="t" style="left:342.17px;top:133px;font-size:11.5px;line-height:16px;transform:scaleX(1.0268);transform-origin:0 0;color:#555">Alignment</div>
<div class="t" style="left:473.54px;top:133px;font-size:11.5px;line-height:16px;transform:scaleX(1.0135);transform-origin:0 0;color:#555">Number</div>
<div class="t" style="left:616.81px;top:133px;font-size:11.5px;line-height:16px;transform:scaleX(0.9378);transform-origin:0 0;color:#555">Styles</div>
<div class="t" style="left:746.27px;top:133px;font-size:11.5px;line-height:16px;transform:scaleX(0.9194);transform-origin:0 0;color:#555">Cells</div>
<div class="t" style="left:846.78px;top:133px;font-size:11.5px;line-height:16px;transform:scaleX(1.0718);transform-origin:0 0;color:#555">Editing</div>
<svg style="left:21px;top:8px" width="14" height="14" viewBox="0 0 14 14"><rect x="0" y="0" width="14" height="14" fill="#fff"/><rect x="2.5" y="2" width="9.5" height="6.5" fill="#217346"/><rect x="3" y="10" width="8" height="2" fill="#217346"/><rect x="5.5" y="10.7" width="2" height="2" fill="#fff"/></svg>
<svg style="left:63px;top:7px" width="17" height="15" viewBox="0 0 17 15"><path d="M5 2 L1.5 5.5 L5 9 M2 5.5 H10 A4.6 4.6 0 0 1 10 14.5 H9" fill="none" stroke="#fff" stroke-width="2"/></svg>
<svg style="left:87px;top:13px" width="5" height="3" viewBox="0 0 5 3"><polygon points="0,0 5,0 2.5,3" fill="#fff"/></svg>
<svg style="left:106px;top:7px" width="17" height="15" viewBox="0 0 17 15"><path d="M12 2 L15.5 5.5 L12 9 M15 5.5 H7 A4.6 4.6 0 0 0 7 14.5 H8" fill="none" stroke="#4a9168" stroke-width="2"/></svg>
<svg style="left:129px;top:13px" width="5" height="3" viewBox="0 0 5 3"><polygon points="0,0 5,0 2.5,3" fill="#4a9168"/></svg>
<svg style="left:158px;top:11px" width="7" height="8" viewBox="0 0 7 8"><rect x="0.5" y="1" width="6" height="1.5" fill="#fff"/><polygon points="0.5,4 6.5,4 3.5,7.5" fill="#fff"/></svg>
<svg style="left:800px;top:10px" width="15" height="11" viewBox="0 0 15 11"><rect x="1.5" y="0.5" width="12" height="9" fill="none" stroke="#fff" stroke-width="1"/><path d="M1.5 2.5H13.5" stroke="#fff"/><path d="M7.5 10V5.5M5 8L7.5 5.5L10 8" fill="none" stroke="#fff" stroke-width="1.3"/></svg>
<div style="left:849px;top:16px;width:10px;height:2px;background:#fff"></div>
<svg style="left:895px;top:10px" width="10" height="10" viewBox="0 0 10 10"><rect x="0.5" y="1" width="9" height="8.5" fill="none" stroke="#fff"/><rect x="0" y="0" width="10" height="2" fill="#fff"/></svg>
<svg style="left:941px;top:10px" width="10" height="10" viewBox="0 0 10 10"><path d="M0.5 0.5L9.5 9.5M9.5 0.5L0.5 9.5" stroke="#fff" stroke-width="1.8"/></svg>
<svg style="left:901px;top:36px" width="17" height="18" viewBox="0 0 17 18"><circle cx="8" cy="5.5" r="4" fill="none" stroke="#e8f4ec" stroke-width="1.2"/><path d="M1.5 17 Q2.5 11 8 10.5" fill="none" stroke="#e8f4ec" stroke-width="1.2"/><path d="M9 13.5H16M12.5 10V17" stroke="#e8f4ec" stroke-width="1.2"/></svg>
<svg style="left:613px;top:37px" width="12" height="15" viewBox="0 0 12 15"><path d="M3 10.5 C1.5 9 1 7.5 1 5.5 A5 5 0 0 1 11 5.5 C11 7.5 10.5 9 9 10.5 Z" fill="none" stroke="#a5d0b4" stroke-width="1.1"/><rect x="3.5" y="12" width="5" height="2" fill="#a5d0b4"/></svg>
<svg style="left:14px;top:64px" width="29" height="32" viewBox="0 0 29 32"><rect x="0" y="4" width="24" height="25" fill="#f0c265"/><rect x="5" y="4.5" width="14" height="3.5" fill="#555"/><path d="M9 5V3.2A3 3 0 0 1 15 3.2V5Z" fill="#555"/><circle cx="12" cy="3.6" r="1" fill="#fff"/><path d="M14.5 12.5H22.5L27.5 17.5V30.5H14.5Z" fill="#fff" stroke="#666"/><path d="M22.5 12.5V17.5H27.5" fill="none" stroke="#666"/></svg>
<div class="t" style="left:11.57px;top:98px;font-size:11.5px;line-height:16.0px;transform:scaleX(0.9841);transform-origin:0 0;color:#444">Paste</div>
<svg style="left:23px;top:120px" width="5" height="3" viewBox="0 0 5 3"><polygon points="0,0 5,0 2.5,3" fill="#666"/></svg>
<svg style="left:50px;top:62px" width="16" height="17" viewBox="0 0 16 17"><path d="M4 1.5L9.5 10M12 1.5L6.5 10" stroke="#555" stroke-width="1.8"/><circle cx="4" cy="13" r="2.6" fill="none" stroke="#5a7ba6" stroke-width="1.2"/><circle cx="12" cy="13" r="2.6" fill="none" stroke="#5a7ba6" stroke-width="1.2"/></svg>
<svg style="left:50px;top:87px" width="16" height="15" viewBox="0 0 16 15"><path d="M0.5 0.5H5.5L7 2V10.5H0.5Z" fill="#fff" stroke="#555"/><path d="M2 3.5H4M2 5.5H4.5M2 7.5H4.5" stroke="#555"/><path d="M6.5 3.5H12L14.5 6V13.5H6.5Z" fill="#fff" stroke="#555"/><path d="M8 6.5H10M8 8.5H13M8 10.5H13" stroke="#555"/></svg>
<svg style="left:72px;top:93px" width="5" height="3" viewBox="0 0 5 3"><polygon points="0,0 5,0 2.5,3" fill="#666"/></svg>
<svg style="left:49px;top:109px" width="18" height="16" viewBox="0 0 18 16"><path d="M15.5 2L11.5 6" stroke="#555" stroke-width="2.2" stroke-linecap="round"/><path d="M8 5L13 10L11 12L6 7Z" fill="#5a5a5a"/><path d="M6 7L11 12L7 15.5L1.5 12.5Z" fill="#e6c779"/></svg>
<svg style="left:75px;top:137px" width="8" height="8" viewBox="0 0 8 8"><path d="M0.5 6V0.5H6" fill="none" stroke="#777"/><path d="M3 3L7 7M4 7H7V4" fill="none" stroke="#777"/></svg>
<svg style="left:283px;top:137px" width="8" height="8" viewBox="0 0 8 8"><path d="M0.5 6V0.5H6" fill="none" stroke="#777"/><path d="M3 3L7 7M4 7H7V4" fill="none" stroke="#777"/></svg>
<svg style="left:449px;top:137px" width="8" height="8" viewBox="0 0 8 8"><path d="M0.5 6V0.5H6" fill="none" stroke="#777"/><path d="M3 3L7 7M4 7H7V4" fill="none" stroke="#777"/></svg>
<svg style="left:537px;top:137px" width="8" height="8" viewBox="0 0 8 8"><path d="M0.5 6V0.5H6" fill="none" stroke="#777"/><path d="M3 3L7 7M4 7H7V4" fill="none" stroke="#777"/></svg>
<div style="left:91px;top:68px;width:112px;height:23px;background:#fff;border:1px solid #c6c6c6;box-sizing:border-box"></div>
<div style="left:201px;top:68px;width:44px;height:23px;background:#fff;border:1px solid #c6c6c6;box-sizing:border-box"></div>
<div class="t" style="left:94.14px;top:69px;font-size:12.0px;line-height:23.0px;transform:scaleX(1.0196);transform-origin:0 0;color:#444">Calibri</div>
<div class="t" style="left:204.5px;top:69px;font-size:12.5px;line-height:23px;color:#444">11</div>
<svg style="left:192px;top:78px" width="5" height="3" viewBox="0 0 5 3"><polygon points="0,0 5,0 2.5,3" fill="#666"/></svg>
<svg style="left:235px;top:78px" width="5" height="3" viewBox="0 0 5 3"><polygon points="0,0 5,0 2.5,3" fill="#666"/></svg>
<div class="t" style="left:250px;top:71px;font-size:14px;line-height:17px;color:#3a3a3a;-webkit-text-stroke:0.3px #3a3a3a">A</div>
<svg style="left:259px;top:72px" width="5" height="3" viewBox="0 0 5 3"><polygon points="0,3 5,3 2.5,0" fill="#555"/></svg>
<div class="t" style="left:274px;top:74px;font-size:11px;line-height:14px;color:#3a3a3a;-webkit-text-stroke:0.3px #3a3a3a">A</div>
<svg style="left:281px;top:72px" width="5" height="3" viewBox="0 0 5 3"><polygon points="0,0 5,0 2.5,3" fill="#5b7a9c"/></svg>
<div class="t" style="left:97px;top:102px;font-size:12px;font-weight:bold;line-height:16px;color:#444">B</div>
<svg style="left:119px;top:105px" width="9" height="10" viewBox="0 0 9 10"><path d="M3 0.75H8.5M0.5 9.25H6M5.8 0.75L3.2 9.25" stroke="#444" stroke-width="1.5"/></svg>
<svg style="left:141px;top:104px" width="10" height="13" viewBox="0 0 10 13"><path d="M1.5 0V5.5A3.5 3.5 0 0 0 8.5 5.5V0" fill="none" stroke="#444" stroke-width="1.8"/><rect x="0" y="11" width="10" height="1.3" fill="#444"/></svg>
<svg style="left:160px;top:109px" width="5" height="3" viewBox="0 0 5 3"><polygon points="0,0 5,0 2.5,3" fill="#666"/></svg>
<div style="left:173px;top:98px;width:1px;height:22px;background:#d6d6d6"></div>
<svg style="left:182px;top:103px" width="14" height="14" viewBox="0 0 14 14"><path d="M0.6 0.6H13.4V13.4H0.6ZM7 0.6V13.4M0.6 7H13.4" fill="none" stroke="#555" stroke-width="1.2"/></svg>
<svg style="left:203px;top:109px" width="5" height="3" viewBox="0 0 5 3"><polygon points="0,0 5,0 2.5,3" fill="#666"/></svg>
<div style="left:216px;top:98px;width:1px;height:22px;background:#d6d6d6"></div>
<svg style="left:225px;top:101px" width="17" height="18" viewBox="0 0 17 18"><rect x="0" y="14" width="15" height="3" fill="#f7f7f7"/><path d="M1.2 8.3L6.8 2.7L12.2 8.1L7.6 12.7A1 1 0 0 1 6.2 12.7Z" fill="#fff" stroke="#555" stroke-width="1.15"/><path d="M5.2 6.2V2.2A1.4 1.4 0 0 1 8 2.2V3.5" fill="none" stroke="#555" stroke-width="1.1"/><path d="M11.8 4.8C14 7.2 16 9.5 15 11.8C14.3 13.2 12 13 11.8 11.2Z" fill="#3f6fa3"/></svg>
<svg style="left:246px;top:109px" width="5" height="3" viewBox="0 0 5 3"><polygon points="0,0 5,0 2.5,3" fill="#666"/></svg>
<div class="t" style="left:261px;top:101px;font-size:13px;line-height:16px;color:#3a3a3a;-webkit-text-stroke:0.45px #3a3a3a">A</div>
<div style="left:258px;top:114px;width:16px;height:4px;background:#e00000"></div>
<svg style="left:280px;top:109px" width="5" height="3" viewBox="0 0 5 3"><polygon points="0,0 5,0 2.5,3" fill="#666"/></svg>
<div style="left:320px;top:68px;width:22px;height:23px;background:#c6c6c6"></div>
<svg style="left:302px;top:71px" width="14" height="10" viewBox="0 0 14 10"><rect x="0" y="0" width="14" height="1.1" fill="#555"/><rect x="0" y="3" width="14" height="1.1" fill="#555"/><rect x="0" y="6" width="14" height="1.1" fill="#555"/></svg>
<svg style="left:324px;top:75px" width="14" height="10" viewBox="0 0 14 10"><rect x="0" y="0" width="14" height="1.1" fill="#555"/><rect x="0" y="3" width="14" height="1.1" fill="#555"/><rect x="0" y="6" width="14" height="1.1" fill="#555"/></svg>
<svg style="left:346px;top:80px" width="14" height="10" viewBox="0 0 14 10"><rect x="0" y="0" width="14" height="1.1" fill="#555"/><rect x="0" y="3" width="14" height="1.1" fill="#555"/><rect x="0" y="6" width="14" height="1.1" fill="#555"/></svg>
<svg style="left:302px;top:105px" width="14" height="13" viewBox="0 0 14 13"><rect x="0" y="0" width="14" height="1.1" fill="#555"/><rect x="0" y="3" width="10" height="1.1" fill="#555"/><rect x="0" y="6" width="14" height="1.1" fill="#555"/><rect x="0" y="9" width="10" height="1.1" fill="#555"/></svg>
<svg style="left:324px;top:105px" width="14" height="13" viewBox="0 0 14 13"><rect x="0.0" y="0" width="14" height="1.1" fill="#555"/><rect x="2.0" y="3" width="10" height="1.1" fill="#555"/><rect x="0.0" y="6" width="14" height="1.1" fill="#555"/><rect x="2.0" y="9" width="10" height="1.1" fill="#555"/></svg>
<svg style="left:346px;top:105px" width="14" height="13" viewBox="0 0 14 13"><rect x="0" y="0" width="14" height="1.1" fill="#555"/><rect x="4" y="3" width="10" height="1.1" fill="#555"/><rect x="0" y="6" width="14" height="1.1" fill="#555"/><rect x="4" y="9" width="10" height="1.1" fill="#555"/></svg>
<svg style="left:368px;top:70px" width="20" height="18" viewBox="0 0 20 18"><text x="0" y="0" transform="translate(5.5,13.5) rotate(-45)" font-family="Liberation Sans" font-size="11" fill="#444" stroke="#444" stroke-width="0.35">ab</text><path d="M8.5 15.5L16 8.2" stroke="#444" stroke-width="1.4"/><polygon points="18.3,5.7 13.6,6.9 17.1,10.4" fill="#444"/></svg>
<svg style="left:390px;top:78px" width="5" height="3" viewBox="0 0 5 3"><polygon points="0,0 5,0 2.5,3" fill="#666"/></svg>
<svg style="left:369px;top:102px" width="18" height="15" viewBox="0 0 18 15"><rect x="1" y="1" width="16" height="1" fill="#555"/><rect x="8" y="4" width="9" height="1" fill="#555"/><rect x="8" y="7" width="9" height="1" fill="#555"/><rect x="8" y="10" width="9" height="1" fill="#555"/><rect x="1" y="13" width="16" height="1" fill="#555"/><path d="M7 7.5H2.5M5 5L2.5 7.5L5 10" fill="none" stroke="#3f6fa3" stroke-width="1.7"/></svg>
<svg style="left:391px;top:102px" width="18" height="15" viewBox="0 0 18 15"><rect x="1" y="1" width="16" height="1" fill="#555"/><rect x="8" y="4" width="9" height="1" fill="#555"/><rect x="8" y="7" width="9" height="1" fill="#555"/><rect x="8" y="10" width="9" height="1" fill="#555"/><rect x="1" y="13" width="16" height="1" fill="#555"/><path d="M1 7.5H5.5M3 5L5.5 7.5L3 10" fill="none" stroke="#3f6fa3" stroke-width="1.7"/></svg>
<div style="left:415px;top:64px;width:1px;height:58px;background:#dadada"></div>
<svg style="left:422px;top:70px" width="18" height="17" viewBox="0 0 18 17"><rect x="1.5" y="1.5" width="9" height="4" fill="#fff" stroke="#555"/><path d="M3 3.5H9M10.5 3.5H15" stroke="#555"/><rect x="1.5" y="8.5" width="9" height="7" fill="#fff" stroke="#555"/><path d="M3 10.5H9M3 13.5H9" stroke="#666"/><path d="M16.5 5.5V9.5A1.2 1.2 0 0 1 15.3 10.7H12M13.8 8.9L12 10.7L13.8 12.5" fill="none" stroke="#4f6a8c" stroke-width="1.1"/></svg>
<svg style="left:423px;top:102px" width="15" height="15" viewBox="0 0 15 15"><path d="M0.5 0.5H14.5V14.5H0.5ZM0.5 3.5H14.5M0.5 11.5H14.5M7.5 0.5V3.5M7.5 11.5V14.5" fill="none" stroke="#aaa"/><path d="M3 7.5H12M4.5 6L3 7.5L4.5 9M10.5 6L12 7.5L10.5 9" fill="none" stroke="#aaa"/></svg>
<svg style="left:445px;top:109px" width="5" height="3" viewBox="0 0 5 3"><polygon points="0,0 5,0 2.5,3" fill="#bbb"/></svg>
<div style="left:464px;top:60px;width:78px;height:22px;background:#fff;border:1px solid #c6c6c6;box-sizing:border-box"></div>
<div class="t" style="left:467.03px;top:61px;font-size:12.0px;line-height:22.0px;transform:scaleX(0.9448);transform-origin:0 0;color:#444">General</div>
<svg style="left:532px;top:70px" width="5" height="3" viewBox="0 0 5 3"><polygon points="0,0 5,0 2.5,3" fill="#666"/></svg>
<div class="t" style="left:471px;top:85px;font-size:15.5px;line-height:18px;color:#555">$</div>
<svg style="left:489px;top:93px" width="5" height="3" viewBox="0 0 5 3"><polygon points="0,0 5,0 2.5,3" fill="#666"/></svg>
<div class="t" style="left:503px;top:86px;font-size:14px;line-height:16px;color:#555">%</div>
<div class="t" style="left:528px;top:81px;font-size:16px;font-weight:bold;line-height:16px;color:#555">,</div>
<svg style="left:466px;top:109px" width="17" height="15" viewBox="0 0 17 15"><path d="M8 3.5H1.5M4 1L1.5 3.5L4 6" fill="none" stroke="#4f7aa8" stroke-width="1.4"/><text x="7.5" y="7" font-family="Liberation Sans" font-size="8.5" fill="#444" stroke="#444" stroke-width="0.25">.0</text><text x="2.5" y="14" font-family="Liberation Sans" font-size="8.5" fill="#444" stroke="#444" stroke-width="0.25">.00</text></svg>
<svg style="left:488px;top:109px" width="17" height="15" viewBox="0 0 17 15"><text x="3" y="7" font-family="Liberation Sans" font-size="8.5" fill="#444" stroke="#444" stroke-width="0.25">.00</text><path d="M1 10.5H7.5M5 8L7.5 10.5L5 13" fill="none" stroke="#4f7aa8" stroke-width="1.4"/><text x="8" y="14" font-family="Liberation Sans" font-size="8.5" fill="#444" stroke="#444" stroke-width="0.25">.0</text></svg>
<svg style="left:553px;top:62px" width="18" height="18" viewBox="0 0 18 18"><rect x="1" y="1" width="4.5" height="3.8" fill="#d2553f"/><rect x="1" y="4.8" width="4.5" height="3.4" fill="#5b7fb0"/><rect x="1" y="8.2" width="4.5" height="4.3" fill="#d2553f"/><path d="M5.5 1.5H15.5V4.5H5.5M10.5 1.5V4.5" fill="#fff" stroke="#666"/><rect x="7.5" y="7.5" width="9" height="9" fill="#fff" stroke="#555"/><path d="M9.5 10.8H14.5M9.5 13.2H14.5M13.3 9.3L10.7 14.8" stroke="#333" stroke-width="0.9"/></svg>
<div class="t" style="left:573.18px;top:64px;font-size:12.2px;line-height:16.0px;transform:scaleX(1.0152);transform-origin:0 0;color:#444">Conditional Formatting</div>
<svg style="left:700px;top:70px" width="5" height="3" viewBox="0 0 5 3"><polygon points="0,0 5,0 2.5,3" fill="#666"/></svg>
<svg style="left:553px;top:85px" width="18" height="18" viewBox="0 0 18 18"><path d="M5.5 5.5H14L8.5 13H5.5Z" fill="#c9c6d6"/><path d="M1.5 1.5H16M1.5 1.5V13H6M1.5 5H14M1.5 9H6M5 1.5V13M9.5 1.5V5M14 1.5V4" fill="none" stroke="#666"/><path d="M16.5 4L10.5 10.5" stroke="#555" stroke-width="2.6"/><path d="M10.5 9.5C8.5 10.5 6.5 12 4 17C7.5 16.5 10.5 14.5 12 11.5Z" fill="#3f6fa8"/><path d="M8.5 12.5C7.5 13.5 7 14 6.5 15" stroke="#9ec0e6" stroke-width="0.8"/></svg>
<div class="t" style="left:572.83px;top:87px;font-size:11.6px;line-height:16.0px;transform:scaleX(1.0148);transform-origin:0 0;color:#444">Format as Table</div>
<svg style="left:658px;top:93px" width="5" height="3" viewBox="0 0 5 3"><polygon points="0,0 5,0 2.5,3" fill="#666"/></svg>
<svg style="left:553px;top:108px" width="18" height="18" viewBox="0 0 18 18"><path d="M5.5 5.5H14L8.5 13H5.5Z" fill="#c4d3e0"/><path d="M1.5 1.5H16M1.5 1.5V13H6M1.5 5H14M1.5 9H6M5 1.5V13M9.5 1.5V5M14 1.5V4" fill="none" stroke="#666"/><path d="M16.5 4L10.5 10.5" stroke="#555" stroke-width="2.6"/><path d="M10.5 9.5C8.5 10.5 6.5 12 4 17C7.5 16.5 10.5 14.5 12 11.5Z" fill="#3f6fa8"/><path d="M8.5 12.5C7.5 13.5 7 14 6.5 15" stroke="#9ec0e6" stroke-width="0.8"/></svg>
<div class="t" style="left:573.24px;top:110px;font-size:11.1px;line-height:16.0px;transform:scaleX(1.0096);transform-origin:0 0;color:#444">Cell Styles</div>
<svg style="left:629px;top:116px" width="5" height="3" viewBox="0 0 5 3"><polygon points="0,0 5,0 2.5,3" fill="#666"/></svg>
<svg style="left:723px;top:62px" width="18" height="18" viewBox="0 0 18 18"><g fill="none" stroke="#a8a8a8" stroke-width="1.2"><rect x="1.5" y="1.5" width="8.5" height="3"/><path d="M5.75 1.5V4.5"/><rect x="8.5" y="6.5" width="8" height="3"/><path d="M12.5 6.5V9.5"/><rect x="1.5" y="11.5" width="8.5" height="5.5"/><path d="M5.75 11.5V17M1.5 14.25H10"/><path d="M7 8H2M4.2 5.8L2 8L4.2 10.2" stroke-width="1.4"/></g></svg>
<div class="t" style="left:742.32px;top:64px;font-size:11.4px;line-height:16.0px;transform:scaleX(1.0197);transform-origin:0 0;color:#a6a6a6">Insert</div>
<svg style="left:782px;top:70px" width="5" height="3" viewBox="0 0 5 3"><polygon points="0,0 5,0 2.5,3" fill="#aaa"/></svg>
<svg style="left:723px;top:85px" width="18" height="18" viewBox="0 0 18 18"><g fill="none" stroke="#a8a8a8" stroke-width="1.2"><rect x="1.5" y="1.5" width="8.5" height="3"/><path d="M5.75 1.5V4.5"/><rect x="4.5" y="6.5" width="4" height="3"/><path d="M11 5L16 10M16 5L11 10" stroke="#bbb" stroke-width="1.4"/><rect x="1.5" y="10.5" width="8.5" height="6"/><path d="M5.75 10.5V16.5M1.5 13.5H10"/></g></svg>
<div class="t" style="left:742.43px;top:87px;font-size:11.4px;line-height:16.0px;transform:scaleX(1.0342);transform-origin:0 0;color:#a6a6a6">Delete</div>
<svg style="left:786px;top:93px" width="5" height="3" viewBox="0 0 5 3"><polygon points="0,0 5,0 2.5,3" fill="#aaa"/></svg>
<svg style="left:723px;top:108px" width="17" height="17" viewBox="0 0 17 17"><path d="M1.5 0.5V3.5M15.5 0.5V3.5M1.5 2H15.5" stroke="#3f6a8c" stroke-width="1.1"/><rect x="1.5" y="5.5" width="14" height="9" fill="#fff" stroke="#555"/><path d="M1.5 8.5H15.5M1.5 11.5H15.5M5 5.5V14.5M8.5 5.5V14.5M12 5.5V14.5" stroke="#777" stroke-width="0.8"/><rect x="5" y="8.5" width="3.5" height="3" fill="#3f6a8c"/><path d="M2 16.3H14" stroke="#555" stroke-width="0.9"/></svg>
<div class="t" style="left:742.40px;top:110px;font-size:11.8px;line-height:16.0px;transform:scaleX(1.0244);transform-origin:0 0;color:#444">Format</div>
<svg style="left:784px;top:116px" width="5" height="3" viewBox="0 0 5 3"><polygon points="0,0 5,0 2.5,3" fill="#666"/></svg>
<svg style="left:807px;top:62px" width="17" height="17" viewBox="0 0 17 17"><path d="M15.3 3.2V1.5H2.3L8.6 8.2L2.3 14.8H15.3V13" fill="none" stroke="#333" stroke-width="2"/></svg>
<svg style="left:830px;top:70px" width="5" height="3" viewBox="0 0 5 3"><polygon points="0,0 5,0 2.5,3" fill="#555"/></svg>
<svg style="left:808px;top:85px" width="16" height="18" viewBox="0 0 16 18"><rect x="1.75" y="1.75" width="12.5" height="14" fill="#fff" stroke="#555" stroke-width="1.5"/><rect x="1" y="1" width="14" height="3" fill="#555"/><path d="M8 6V13M5 10L8 13L11 10" fill="none" stroke="#3f6fa3" stroke-width="2"/></svg>
<svg style="left:828px;top:93px" width="5" height="3" viewBox="0 0 5 3"><polygon points="0,0 5,0 2.5,3" fill="#555"/></svg>
<svg style="left:808px;top:109px" width="17" height="15" viewBox="0 0 17 15"><path d="M1.5 9.5L8.5 2.5A1.5 1.5 0 0 1 10.5 2.5L13 5A1.5 1.5 0 0 1 13 7L6.5 13.5H5Z" fill="#e8798e"/><path d="M1.5 9.5L5 13.5" stroke="#f4b5c0" stroke-width="1"/><path d="M5 13.75H15" stroke="#555" stroke-width="1.3"/></svg>
<svg style="left:828px;top:116px" width="5" height="3" viewBox="0 0 5 3"><polygon points="0,0 5,0 2.5,3" fill="#555"/></svg>
<div class="t" style="left:846px;top:63px;font-size:16px;font-weight:bold;line-height:19px;color:#3f78b5">A</div>
<div class="t" style="left:847px;top:77px;font-size:15.5px;font-weight:bold;line-height:18px;color:#9a5cc0">Z</div>
<svg style="left:857px;top:72px" width="20" height="17" viewBox="0 0 20 17"><path d="M1 1H18L12 7.5V15H9V7.5Z" fill="#fff" stroke="#666" stroke-width="1.3"/><path d="M1 1H18L15 4.5H4Z" fill="#666"/></svg>
<div class="t" style="left:843.44px;top:98px;font-size:12.1px;line-height:16.0px;transform:scaleX(1.0239);transform-origin:0 0;color:#444">Sort &amp;</div>
<div class="t" style="left:843.00px;top:114px;font-size:11.6px;line-height:16.0px;transform:scaleX(1.0467);transform-origin:0 0;color:#444">Filter</div>
<svg style="left:873px;top:121px" width="5" height="3" viewBox="0 0 5 3"><polygon points="0,0 5,0 2.5,3" fill="#666"/></svg>
<svg style="left:889px;top:63px" width="30" height="30" viewBox="0 0 30 30"><circle cx="18" cy="12" r="8.9" fill="#fff" stroke="#4a7ab0" stroke-width="1.9"/><path d="M12 18L3 27" stroke="#4a7ab0" stroke-width="3.2" stroke-linecap="round"/></svg>
<div class="t" style="left:885.69px;top:98px;font-size:11.9px;line-height:16.0px;transform:scaleX(1.0322);transform-origin:0 0;color:#444">Find &amp;</div>
<div class="t" style="left:883.99px;top:114px;font-size:11.1px;line-height:16.0px;transform:scaleX(1.0206);transform-origin:0 0;color:#444">Select</div>
<svg style="left:918px;top:121px" width="5" height="3" viewBox="0 0 5 3"><polygon points="0,0 5,0 2.5,3" fill="#666"/></svg>
<svg style="left:950px;top:137px" width="10" height="7" viewBox="0 0 10 7"><path d="M1 6L5 2L9 6" fill="none" stroke="#555" stroke-width="1.6"/></svg>
<div style="left:0px;top:57px;width:1px;height:980px;background:#245c3e"></div>
</body></html>
